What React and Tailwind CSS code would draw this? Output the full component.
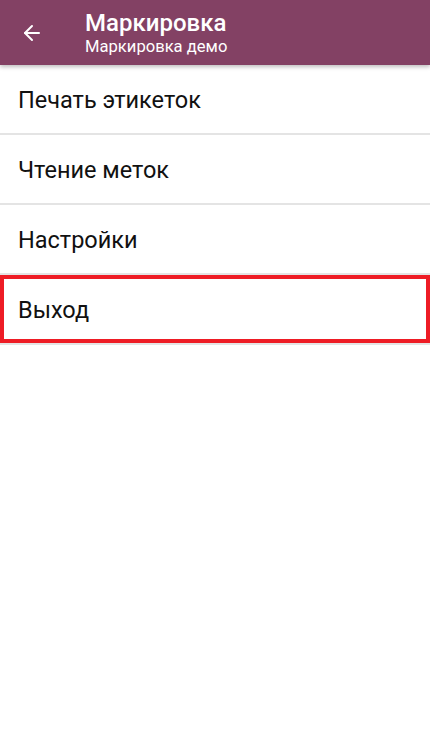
import { ArrowLeft } from "lucide-react";

const items = ["Печать этикеток", "Чтение меток", "Настройки"];

export default function App() {
  return (
    <div className="min-h-[738px] bg-white font-['Roboto',sans-serif]">
      {/* Toolbar */}
      <div className="relative z-10 flex h-[65px] items-center bg-[#834164] shadow-[0_2px_4px_rgba(0,0,0,0.25)]">
        <div className="flex w-[85px] pl-[20px]">
          <ArrowLeft size={24} strokeWidth={2} color="white" />
        </div>
        <div className="flex flex-col pt-[2px] text-white">
          <span className="text-[24px] font-medium leading-[26px]">Маркировка</span>
          <span className="text-[16.6px] leading-[21px]">Маркировка демо</span>
        </div>
      </div>

      {/* Menu */}
      <div>
        {items.map((label) => (
          <div
            key={label}
            className="flex h-[70px] items-center border-b-2 border-[#e4e4e4] pl-[18px] pt-[3px] text-[23.5px] text-[#111]"
          >
            {label}
          </div>
        ))}
        <div className="border-b-2 border-[#e4e4e4]">
          <div className="flex h-[68px] items-center border-4 border-[#ee1c25] pl-[14px] pt-[3px] text-[23.5px] text-[#111]">
            Выход
          </div>
        </div>
      </div>
    </div>
  );
}
